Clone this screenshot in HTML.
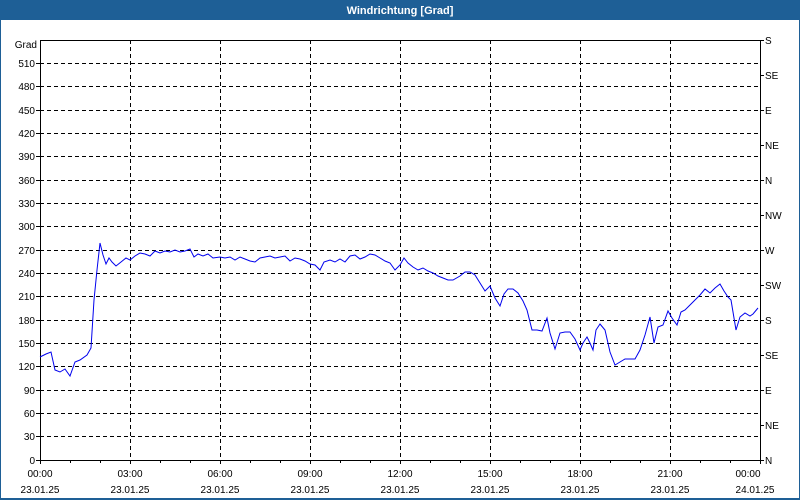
<!DOCTYPE html>
<html><head><meta charset="utf-8"><style>
html,body{margin:0;padding:0;background:#fff}
body{width:800px;height:500px;overflow:hidden;position:relative;font-family:"Liberation Sans","DejaVu Sans",sans-serif}
</style></head><body>
<svg width="800" height="500" xmlns="http://www.w3.org/2000/svg" style="position:absolute;left:0;top:0">
<rect x="0" y="0" width="800" height="500" fill="#1e5f96"/>
<rect x="1" y="20" width="798" height="478" fill="#fff"/>
<text x="400" y="14" font-size="11" font-weight="bold" fill="#fff" text-anchor="middle" font-family="Liberation Sans, sans-serif">Windrichtung [Grad]</text>
<g stroke="#000" stroke-dasharray="4,3" stroke-width="1">
<line x1="40" x2="760" y1="63.5" y2="63.5"/><line x1="40" x2="760" y1="86.5" y2="86.5"/><line x1="40" x2="760" y1="110.5" y2="110.5"/><line x1="40" x2="760" y1="133.5" y2="133.5"/><line x1="40" x2="760" y1="156.5" y2="156.5"/><line x1="40" x2="760" y1="180.5" y2="180.5"/><line x1="40" x2="760" y1="203.5" y2="203.5"/><line x1="40" x2="760" y1="226.5" y2="226.5"/><line x1="40" x2="760" y1="250.5" y2="250.5"/><line x1="40" x2="760" y1="273.5" y2="273.5"/><line x1="40" x2="760" y1="296.5" y2="296.5"/><line x1="40" x2="760" y1="320.5" y2="320.5"/><line x1="40" x2="760" y1="343.5" y2="343.5"/><line x1="40" x2="760" y1="366.5" y2="366.5"/><line x1="40" x2="760" y1="390.5" y2="390.5"/><line x1="40" x2="760" y1="413.5" y2="413.5"/><line x1="40" x2="760" y1="436.5" y2="436.5"/>
<line x1="130.5" x2="130.5" y1="40" y2="460"/><line x1="220.5" x2="220.5" y1="40" y2="460"/><line x1="310.5" x2="310.5" y1="40" y2="460"/><line x1="400.5" x2="400.5" y1="40" y2="460"/><line x1="490.5" x2="490.5" y1="40" y2="460"/><line x1="580.5" x2="580.5" y1="40" y2="460"/><line x1="670.5" x2="670.5" y1="40" y2="460"/>
</g>
<rect x="40.5" y="40.5" width="720" height="420" fill="none" stroke="#000" stroke-width="1"/>
<g stroke="#000" stroke-width="1">
<path d="M760 40.5h4M760 75.5h4M760 110.5h4M760 145.5h4M760 180.5h4M760 215.5h4M760 250.5h4M760 285.5h4M760 320.5h4M760 355.5h4M760 390.5h4M760 425.5h4M760 460.5h4"/>
<path d="M36 63.5h4M36 86.5h4M36 110.5h4M36 133.5h4M36 156.5h4M36 180.5h4M36 203.5h4M36 226.5h4M36 250.5h4M36 273.5h4M36 296.5h4M36 320.5h4M36 343.5h4M36 366.5h4M36 390.5h4M36 413.5h4M36 436.5h4M36 460.5h4"/>
<path d="M40.5 460v4M70.5 460v3M100.5 460v3M130.5 460v4M160.5 460v3M190.5 460v3M220.5 460v4M250.5 460v3M280.5 460v3M310.5 460v4M340.5 460v3M370.5 460v3M400.5 460v4M430.5 460v3M460.5 460v3M490.5 460v4M520.5 460v3M550.5 460v3M580.5 460v4M610.5 460v3M640.5 460v3M670.5 460v4M700.5 460v3M730.5 460v3M760.5 460v4"/>
</g>
<polyline fill="none" stroke="#0000ee" stroke-width="1" points="40,357 46,354 51,352 55,370 60,372 65,369 70,376 75,362 80,360 87,355 91,348 94,300 97,270 100,243 103,255 106,264 109,258 112,262 116,266 121,262 126,258 130,260 135,256 140,253 145,254 150,256 155,251 160,253 165,251 170,252 175,250 180,252 185,251 190,249 194,257 198,254 203,256 208,254 213,258 220,257 225,258 230,257 235,260 240,257 245,259 250,261 255,262 260,258 265,257 270,256 275,258 280,257 285,256 290,261 295,258 300,259 305,261 310,264 315,265 320,270 324,262 330,260 335,262 340,259 345,262 350,256 355,255 360,259 365,257 370,254 375,255 380,258 385,261 390,263 395,270 400,265 404,258 408,263 413,267 418,270 423,268 428,271 433,273 438,276 443,278 448,280 453,280 460,276 465,272 470,272 475,275 480,283 485,291 490,286 495,298 500,306 504,294 508,289 513,289 518,293 523,301 527,310 532,330 537,330 542,331 547,318 550,333 555,349 560,333 565,332 570,332 575,339 580,350 583,343 587,337 590,343 593,350 596,330 600,324 605,330 610,352 615,365 620,362 625,359 630,359 635,359 640,350 645,335 650,317 654,343 658,327 663,325 668,311 672,318 677,325 681,312 685,310 690,305 695,300 700,295 705,289 710,293 715,288 720,284 724,291 728,297 731,300 736,330 740,317 745,313 750,316 753,314 758,308"/>
<g font-size="10" fill="#000" text-anchor="end" font-family="Liberation Sans, sans-serif">
<text x="37" y="48">Grad</text>
<text x="35" y="67">510</text><text x="35" y="90">480</text><text x="35" y="114">450</text><text x="35" y="137">420</text><text x="35" y="160">390</text><text x="35" y="184">360</text><text x="35" y="207">330</text><text x="35" y="230">300</text><text x="35" y="254">270</text><text x="35" y="277">240</text><text x="35" y="300">210</text><text x="35" y="324">180</text><text x="35" y="347">150</text><text x="35" y="370">120</text><text x="35" y="394">90</text><text x="35" y="417">60</text><text x="35" y="440">30</text><text x="35" y="464">0</text>
</g>
<g font-size="10" fill="#000" font-family="Liberation Sans, sans-serif">
<text x="765" y="44">S</text><text x="765" y="79">SE</text><text x="765" y="114">E</text><text x="765" y="149">NE</text><text x="765" y="184">N</text><text x="765" y="219">NW</text><text x="765" y="254">W</text><text x="765" y="289">SW</text><text x="765" y="324">S</text><text x="765" y="359">SE</text><text x="765" y="394">E</text><text x="765" y="429">NE</text><text x="765" y="464">N</text>
</g>
<g font-size="10" fill="#000" text-anchor="middle" font-family="Liberation Sans, sans-serif">
<text x="40" y="477">00:00</text><text x="130" y="477">03:00</text><text x="220" y="477">06:00</text><text x="310" y="477">09:00</text><text x="400" y="477">12:00</text><text x="490" y="477">15:00</text><text x="580" y="477">18:00</text><text x="670" y="477">21:00</text><text x="748" y="477">00:00</text>
<text x="40" y="493">23.01.25</text><text x="130" y="493">23.01.25</text><text x="220" y="493">23.01.25</text><text x="310" y="493">23.01.25</text><text x="400" y="493">23.01.25</text><text x="490" y="493">23.01.25</text><text x="580" y="493">23.01.25</text><text x="670" y="493">23.01.25</text><text x="755" y="493">24.01.25</text>
</g>
</svg>
</body></html>
